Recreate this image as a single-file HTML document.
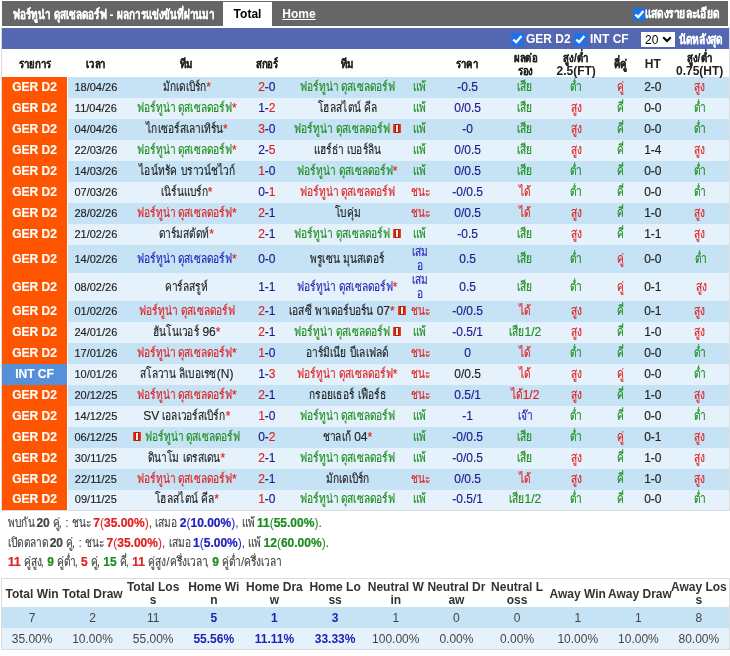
<!DOCTYPE html>
<html lang="th"><head><meta charset="utf-8"><style>
*{box-sizing:border-box}
html,body{margin:0;padding:0;background:#fff}
body{will-change:transform}
body{width:730px;height:656px;overflow:hidden;position:relative;font-family:"Liberation Sans",sans-serif;font-size:12px;color:#222222}
.t{display:inline-block;font-size:13px;line-height:0;transform:scaleX(var(--s));transform-origin:0 0;--s:.78;-webkit-text-stroke:.15px}
.topbar{position:absolute;left:2px;top:1px;width:726px;height:25px;background:#666666;color:#fff;font-weight:bold}
.topbar .title{position:absolute;left:11px;top:7px;white-space:nowrap}
.tab{position:absolute;top:1px;height:24px;line-height:25px;text-align:center;font-weight:bold}
.tab1{left:221px;width:49px;background:#fff;color:#000}
.tab2{left:268px;width:58px;color:#fff;text-decoration:underline}
.chk{position:absolute;width:13px;height:13px;border-radius:2px;background:#1a73e8}
.chk svg{position:absolute;left:0;top:0}
.detail{position:absolute;left:643px;top:6px;white-space:nowrap}
.bluebar{position:absolute;left:2px;top:28px;width:727px;height:21px;background:#5468b2;color:#fff;font-weight:bold;white-space:nowrap}
.bluebar span.lb{position:absolute;top:4px}
.bluebar span.lb2{top:5px}
.sel{position:absolute;left:639px;top:4px;width:34px;height:15px;background:#fff;color:#000;font-weight:normal;font-size:12px}
.main{position:absolute;left:1px;top:49px;width:729px;border:1px solid #dddddd;border-top:0;border-collapse:collapse;table-layout:fixed}
table{border-collapse:collapse;table-layout:fixed}
td,th{padding:0;text-align:center;white-space:nowrap;overflow:visible}
.main th{height:25px;padding-top:3px;line-height:12.5px;font-weight:bold;color:#222222;background:#fff}
.main td{height:21px;line-height:14px;padding-bottom:2px;-webkit-text-stroke:.15px}
.main tr.last td{height:20px;padding-bottom:1px}
.main tr.tall td{height:28px;line-height:13px;padding:1px 0 0}
.main tr.tall td.sm{line-height:13.5px;padding:1px 0 0;vertical-align:top}
.r1 td{background:#c6e2f5}
.r2 td{background:#e6f2fb}
.main td.lg{background:#ff5500;color:#fff;font-weight:bold;border-right:1px solid #fff}
.main td.lg.int{background:#5690d8}
.dt{font-size:11px}
.main td:last-child,.main th:last-child{padding-right:3px}
.cg{color:#1c8c1c}
.cr{color:#e0201f}
.cb{color:#1a1a8c}
.cbt{color:#2626b8}
.ck{color:#222222}
.st{color:#e0201f;font-weight:normal}
.ic{display:inline-block;width:8px;height:9px;background:linear-gradient(to right,#e8561a,#c4160e 30%,#c4160e 70%,#e8561a);vertical-align:0;position:relative}
.ic:after{content:"";position:absolute;left:3px;top:1px;width:2px;height:7px;background:#fff6e6}
.sum{position:absolute;left:8px;white-space:nowrap;color:#444}
.sum .t{--s:.78}
.sb{color:#2020c0}
.main th .t{--s:.8;font-size:12px;-webkit-text-stroke:.2px}
.topbar .t,.bluebar .t{-webkit-text-stroke:.2px}
.topbar .title .t{--s:.76}
.sum b{font-weight:bold;-webkit-text-stroke:.2px}
.stats{position:absolute;left:1px;top:578px;width:729px;border:1px solid #dddddd}
.stats th{height:28px;padding-top:2px;line-height:13px;font-weight:bold;color:#333;background:#fff}
.stats td{height:21px;color:#444;padding-top:1px}
.stats tr.l2 td{height:21px}
.stats td.hs{color:#2020b0;font-weight:bold}
</style></head><body>
<div class="topbar">
 <div class="title"><span class="t" style="margin-right:-11.76px">ฟอร์ทูน่า</span> <span class="t" style="margin-right:-16.56px">ดุสเซลดอร์ฟ</span> - <span class="t" style="margin-right:-30.72px">ผลการแข่งขันที่ผ่านมา</span></div>
 <div class="tab tab1">Total</div>
 <div class="tab tab2">Home</div>
 <div class="chk" style="left:631px;top:7px"><svg width="13" height="13" viewBox="0 0 13 13"><path d="M2.3 6.6 L5.2 9.2 L10.4 3" stroke="#fff" stroke-width="2.3" fill="none"/></svg></div>
 <div class="detail"><span class="t" style="margin-right:-20.90px">แสดงรายละเอียด</span></div>
</div>
<div style="position:absolute;left:1px;top:27px;width:1px;height:22px;background:#dddddd"></div><div style="position:absolute;left:729px;top:27px;width:1px;height:22px;background:#dddddd"></div>
<div class="bluebar">
 <div class="chk" style="left:509px;top:5px"><svg width="13" height="13" viewBox="0 0 13 13"><path d="M2.3 6.6 L5.2 9.2 L10.4 3" stroke="#fff" stroke-width="2.3" fill="none"/></svg></div>
 <span class="lb" style="left:524px">GER D2</span>
 <div class="chk" style="left:572px;top:5px"><svg width="13" height="13" viewBox="0 0 13 13"><path d="M2.3 6.6 L5.2 9.2 L10.4 3" stroke="#fff" stroke-width="2.3" fill="none"/></svg></div>
 <span class="lb" style="left:588px">INT CF</span>
 <div class="sel"><span style="position:absolute;left:4px;top:1px">20</span><svg style="position:absolute;left:21px;top:4px" width="10" height="7" viewBox="0 0 10 7"><path d="M1.2 1.3 L5 5 L8.8 1.3" stroke="#000" stroke-width="2" fill="none"/></svg></div>
 <span class="lb lb2" style="left:677px"><span class="t" style="margin-right:-12.32px">นัดหลังสุด</span></span>
</div>
<table class="main"><colgroup><col style="width:66px"><col style="width:56px"><col style="width:126px"><col style="width:34px"><col style="width:127px"><col style="width:18px"><col style="width:77px"><col style="width:38px"><col style="width:64px"><col style="width:24px"><col style="width:41px"><col style="width:56px"></colgroup>
<tr><th><span class="t" style="margin-right:-8.00px">รายการ</span></th><th><span class="t" style="margin-right:-5.00px">เวลา</span></th><th><span class="t" style="margin-right:-3.20px">ทีม</span></th><th><span class="t" style="margin-right:-5.40px">สกอร์</span></th><th><span class="t" style="margin-right:-3.20px">ทีม</span></th><th></th><th><span class="t" style="margin-right:-5.60px">ราคา</span></th><th><span class="t" style="margin-right:-5.80px">ผลต่อ</span><br><span class="t" style="margin-right:-3.80px">รอง</span></th><th><span class="t" style="margin-right:-2.60px">สูง</span>/<span class="t" style="margin-right:-3.00px">ต่ำ</span><br>2.5(FT)</th><th><span class="t" style="margin-right:-3.20px">คี่คู่</span></th><th>HT</th><th><span class="t" style="margin-right:-2.60px">สูง</span>/<span class="t" style="margin-right:-3.00px">ต่ำ</span><br>0.75(HT)</th></tr>
<tr class="r1"><td class="lg">GER D2</td><td class="dt">18/04/26</td><td><span class="ck"><span class="t" style="margin-right:-12.32px">มักเดเบิร์ก</span><b class="st">*</b></span></td><td><span class="cr">2</span><span class="cb">-0</span></td><td><span class="cg"><span class="t" style="margin-right:-10.78px">ฟอร์ทูน่า</span> <span class="t" style="margin-right:-15.18px">ดุสเซลดอร์ฟ</span></span></td><td class="cg sm"><span class="t" style="margin-right:-3.74px">แพ้</span></td><td class="cb">-0.5</td><td class="cg"><span class="t" style="margin-right:-4.40px">เสีย</span></td><td class="cg"><span class="t" style="margin-right:-3.30px">ต่ำ</span></td><td class="cr"><span class="t" style="margin-right:-1.98px">คู่</span></td><td class="ht">2-0</td><td class="cr"><span class="t" style="margin-right:-3.08px">สูง</span></td></tr><tr class="r2"><td class="lg">GER D2</td><td class="dt">11/04/26</td><td><span class="cg"><span class="t" style="margin-right:-10.78px">ฟอร์ทูน่า</span> <span class="t" style="margin-right:-15.18px">ดุสเซลดอร์ฟ</span><b class="st">*</b></span></td><td><span class="cb">1-</span><span class="cr">2</span></td><td><span class="ck"><span class="t" style="margin-right:-12.10px">โฮลสไตน์</span> <span class="t" style="margin-right:-3.74px">คีล</span></span></td><td class="cg sm"><span class="t" style="margin-right:-3.74px">แพ้</span></td><td class="cb">0/0.5</td><td class="cg"><span class="t" style="margin-right:-4.40px">เสีย</span></td><td class="cr"><span class="t" style="margin-right:-3.08px">สูง</span></td><td class="cg"><span class="t" style="margin-right:-1.98px">คี่</span></td><td class="ht">0-0</td><td class="cg"><span class="t" style="margin-right:-3.30px">ต่ำ</span></td></tr><tr class="r1"><td class="lg">GER D2</td><td class="dt">04/04/26</td><td><span class="ck"><span class="t" style="margin-right:-21.78px">ไกเซอร์สเลาเทิร์น</span><b class="st">*</b></span></td><td><span class="cr">3</span><span class="cb">-0</span></td><td><span class="cg"><span class="t" style="margin-right:-10.78px">ฟอร์ทูน่า</span> <span class="t" style="margin-right:-15.18px">ดุสเซลดอร์ฟ</span> <i class="ic"></i></span></td><td class="cg sm"><span class="t" style="margin-right:-3.74px">แพ้</span></td><td class="cb">-0</td><td class="cg"><span class="t" style="margin-right:-4.40px">เสีย</span></td><td class="cr"><span class="t" style="margin-right:-3.08px">สูง</span></td><td class="cg"><span class="t" style="margin-right:-1.98px">คี่</span></td><td class="ht">0-0</td><td class="cg"><span class="t" style="margin-right:-3.30px">ต่ำ</span></td></tr><tr class="r2"><td class="lg">GER D2</td><td class="dt">22/03/26</td><td><span class="cg"><span class="t" style="margin-right:-10.78px">ฟอร์ทูน่า</span> <span class="t" style="margin-right:-15.18px">ดุสเซลดอร์ฟ</span><b class="st">*</b></span></td><td><span class="cb">2-</span><span class="cr">5</span></td><td><span class="ck"><span class="t" style="margin-right:-8.36px">แฮร์ธ่า</span> <span class="t" style="margin-right:-9.68px">เบอร์ลิน</span></span></td><td class="cg sm"><span class="t" style="margin-right:-3.74px">แพ้</span></td><td class="cb">0/0.5</td><td class="cg"><span class="t" style="margin-right:-4.40px">เสีย</span></td><td class="cr"><span class="t" style="margin-right:-3.08px">สูง</span></td><td class="cg"><span class="t" style="margin-right:-1.98px">คี่</span></td><td class="ht">1-4</td><td class="cr"><span class="t" style="margin-right:-3.08px">สูง</span></td></tr><tr class="r1"><td class="lg">GER D2</td><td class="dt">14/03/26</td><td><span class="ck"><span class="t" style="margin-right:-10.78px">ไอน์ทรัค</span> <span class="t" style="margin-right:-15.18px">บราวน์ชไวก์</span></span></td><td><span class="cr">1</span><span class="cb">-0</span></td><td><span class="cg"><span class="t" style="margin-right:-10.78px">ฟอร์ทูน่า</span> <span class="t" style="margin-right:-15.18px">ดุสเซลดอร์ฟ</span><b class="st">*</b></span></td><td class="cg sm"><span class="t" style="margin-right:-3.74px">แพ้</span></td><td class="cb">0/0.5</td><td class="cg"><span class="t" style="margin-right:-4.40px">เสีย</span></td><td class="cg"><span class="t" style="margin-right:-3.30px">ต่ำ</span></td><td class="cg"><span class="t" style="margin-right:-1.98px">คี่</span></td><td class="ht">0-0</td><td class="cg"><span class="t" style="margin-right:-3.30px">ต่ำ</span></td></tr><tr class="r2"><td class="lg">GER D2</td><td class="dt">07/03/26</td><td><span class="ck"><span class="t" style="margin-right:-13.20px">เนิร์นแบร์ก</span><b class="st">*</b></span></td><td><span class="cb">0-</span><span class="cr">1</span></td><td><span class="cr"><span class="t" style="margin-right:-10.78px">ฟอร์ทูน่า</span> <span class="t" style="margin-right:-15.18px">ดุสเซลดอร์ฟ</span></span></td><td class="cr sm"><span class="t" style="margin-right:-5.50px">ชนะ</span></td><td class="cb">-0/0.5</td><td class="cr"><span class="t" style="margin-right:-3.30px">ได้</span></td><td class="cg"><span class="t" style="margin-right:-3.30px">ต่ำ</span></td><td class="cg"><span class="t" style="margin-right:-1.98px">คี่</span></td><td class="ht">0-0</td><td class="cg"><span class="t" style="margin-right:-3.30px">ต่ำ</span></td></tr><tr class="r1"><td class="lg">GER D2</td><td class="dt">28/02/26</td><td><span class="cr"><span class="t" style="margin-right:-10.78px">ฟอร์ทูน่า</span> <span class="t" style="margin-right:-15.18px">ดุสเซลดอร์ฟ</span><b class="st">*</b></span></td><td><span class="cr">2</span><span class="cb">-1</span></td><td><span class="ck"><span class="t" style="margin-right:-7.26px">โบคุ่ม</span></span></td><td class="cr sm"><span class="t" style="margin-right:-5.50px">ชนะ</span></td><td class="cb">0/0.5</td><td class="cr"><span class="t" style="margin-right:-3.30px">ได้</span></td><td class="cr"><span class="t" style="margin-right:-3.08px">สูง</span></td><td class="cg"><span class="t" style="margin-right:-1.98px">คี่</span></td><td class="ht">1-0</td><td class="cr"><span class="t" style="margin-right:-3.08px">สูง</span></td></tr><tr class="r2"><td class="lg">GER D2</td><td class="dt">21/02/26</td><td><span class="ck"><span class="t" style="margin-right:-14.08px">ดาร์มสตัดท์</span><b class="st">*</b></span></td><td><span class="cr">2</span><span class="cb">-1</span></td><td><span class="cg"><span class="t" style="margin-right:-10.78px">ฟอร์ทูน่า</span> <span class="t" style="margin-right:-15.18px">ดุสเซลดอร์ฟ</span> <i class="ic"></i></span></td><td class="cg sm"><span class="t" style="margin-right:-3.74px">แพ้</span></td><td class="cb">-0.5</td><td class="cg"><span class="t" style="margin-right:-4.40px">เสีย</span></td><td class="cr"><span class="t" style="margin-right:-3.08px">สูง</span></td><td class="cg"><span class="t" style="margin-right:-1.98px">คี่</span></td><td class="ht">1-1</td><td class="cr"><span class="t" style="margin-right:-3.08px">สูง</span></td></tr><tr class="r1 tall"><td class="lg">GER D2</td><td class="dt">14/02/26</td><td><span class="cbt"><span class="t" style="margin-right:-10.78px">ฟอร์ทูน่า</span> <span class="t" style="margin-right:-15.18px">ดุสเซลดอร์ฟ</span><b class="st">*</b></span></td><td><span class="cb">0-0</span></td><td><span class="ck"><span class="t" style="margin-right:-8.36px">พรูเซน</span> <span class="t" style="margin-right:-11.66px">มุนสเตอร์</span></span></td><td class="cbt sm"><span class="t" style="margin-right:-4.62px">เสม</span><br><span class="t" style="margin-right:-1.76px">อ</span></td><td class="cb">0.5</td><td class="cg"><span class="t" style="margin-right:-4.40px">เสีย</span></td><td class="cg"><span class="t" style="margin-right:-3.30px">ต่ำ</span></td><td class="cr"><span class="t" style="margin-right:-1.98px">คู่</span></td><td class="ht">0-0</td><td class="cg"><span class="t" style="margin-right:-3.30px">ต่ำ</span></td></tr><tr class="r2 tall"><td class="lg">GER D2</td><td class="dt">08/02/26</td><td><span class="ck"><span class="t" style="margin-right:-12.10px">คาร์ลสรูห์</span></span></td><td><span class="cb">1-1</span></td><td><span class="cbt"><span class="t" style="margin-right:-10.78px">ฟอร์ทูน่า</span> <span class="t" style="margin-right:-15.18px">ดุสเซลดอร์ฟ</span><b class="st">*</b></span></td><td class="cbt sm"><span class="t" style="margin-right:-4.62px">เสม</span><br><span class="t" style="margin-right:-1.76px">อ</span></td><td class="cb">0.5</td><td class="cg"><span class="t" style="margin-right:-4.40px">เสีย</span></td><td class="cg"><span class="t" style="margin-right:-3.30px">ต่ำ</span></td><td class="cr"><span class="t" style="margin-right:-1.98px">คู่</span></td><td class="ht">0-1</td><td class="cr"><span class="t" style="margin-right:-3.08px">สูง</span></td></tr><tr class="r1"><td class="lg">GER D2</td><td class="dt">01/02/26</td><td><span class="cr"><span class="t" style="margin-right:-10.78px">ฟอร์ทูน่า</span> <span class="t" style="margin-right:-15.18px">ดุสเซลดอร์ฟ</span></span></td><td><span class="cr">2</span><span class="cb">-1</span></td><td><span class="ck"><span class="t" style="margin-right:-6.38px">เอสซี</span> <span class="t" style="margin-right:-16.50px">พาเดอร์บอร์น</span> 07<b class="st">*</b> <i class="ic"></i></span></td><td class="cr sm"><span class="t" style="margin-right:-5.50px">ชนะ</span></td><td class="cb">-0/0.5</td><td class="cr"><span class="t" style="margin-right:-3.30px">ได้</span></td><td class="cr"><span class="t" style="margin-right:-3.08px">สูง</span></td><td class="cg"><span class="t" style="margin-right:-1.98px">คี่</span></td><td class="ht">0-1</td><td class="cr"><span class="t" style="margin-right:-3.08px">สูง</span></td></tr><tr class="r2"><td class="lg">GER D2</td><td class="dt">24/01/26</td><td><span class="ck"><span class="t" style="margin-right:-12.98px">ฮันโนเวอร์</span> 96<b class="st">*</b></span></td><td><span class="cr">2</span><span class="cb">-1</span></td><td><span class="cg"><span class="t" style="margin-right:-10.78px">ฟอร์ทูน่า</span> <span class="t" style="margin-right:-15.18px">ดุสเซลดอร์ฟ</span> <i class="ic"></i></span></td><td class="cg sm"><span class="t" style="margin-right:-3.74px">แพ้</span></td><td class="cb">-0.5/1</td><td class="cg"><span class="t" style="margin-right:-4.40px">เสีย</span>1/2</td><td class="cr"><span class="t" style="margin-right:-3.08px">สูง</span></td><td class="cg"><span class="t" style="margin-right:-1.98px">คี่</span></td><td class="ht">1-0</td><td class="cr"><span class="t" style="margin-right:-3.08px">สูง</span></td></tr><tr class="r1"><td class="lg">GER D2</td><td class="dt">17/01/26</td><td><span class="cr"><span class="t" style="margin-right:-10.78px">ฟอร์ทูน่า</span> <span class="t" style="margin-right:-15.18px">ดุสเซลดอร์ฟ</span><b class="st">*</b></span></td><td><span class="cr">1</span><span class="cb">-0</span></td><td><span class="ck"><span class="t" style="margin-right:-11.44px">อาร์มิเนีย</span> <span class="t" style="margin-right:-10.78px">บีเลเฟลด์</span></span></td><td class="cr sm"><span class="t" style="margin-right:-5.50px">ชนะ</span></td><td class="cb">0</td><td class="cr"><span class="t" style="margin-right:-3.30px">ได้</span></td><td class="cg"><span class="t" style="margin-right:-3.30px">ต่ำ</span></td><td class="cg"><span class="t" style="margin-right:-1.98px">คี่</span></td><td class="ht">0-0</td><td class="cg"><span class="t" style="margin-right:-3.30px">ต่ำ</span></td></tr><tr class="r2"><td class="lg int">INT CF</td><td class="dt">10/01/26</td><td><span class="ck"><span class="t" style="margin-right:-10.12px">สโลวาน</span> <span class="t" style="margin-right:-10.56px">ลิเบอเรซ</span>(N)</span></td><td><span class="cb">1-</span><span class="cr">3</span></td><td><span class="cr"><span class="t" style="margin-right:-10.78px">ฟอร์ทูน่า</span> <span class="t" style="margin-right:-15.18px">ดุสเซลดอร์ฟ</span><b class="st">*</b></span></td><td class="cr sm"><span class="t" style="margin-right:-5.50px">ชนะ</span></td><td class="ck">0/0.5</td><td class="cr"><span class="t" style="margin-right:-3.30px">ได้</span></td><td class="cr"><span class="t" style="margin-right:-3.08px">สูง</span></td><td class="cr"><span class="t" style="margin-right:-1.98px">คู่</span></td><td class="ht">0-0</td><td class="cg"><span class="t" style="margin-right:-3.30px">ต่ำ</span></td></tr><tr class="r1"><td class="lg">GER D2</td><td class="dt">20/12/25</td><td><span class="cr"><span class="t" style="margin-right:-10.78px">ฟอร์ทูน่า</span> <span class="t" style="margin-right:-15.18px">ดุสเซลดอร์ฟ</span><b class="st">*</b></span></td><td><span class="cr">2</span><span class="cb">-1</span></td><td><span class="ck"><span class="t" style="margin-right:-12.76px">กรอยเธอร์</span> <span class="t" style="margin-right:-7.92px">เฟือร์ธ</span></span></td><td class="cr sm"><span class="t" style="margin-right:-5.50px">ชนะ</span></td><td class="cb">0.5/1</td><td class="cr"><span class="t" style="margin-right:-3.30px">ได้</span>1/2</td><td class="cr"><span class="t" style="margin-right:-3.08px">สูง</span></td><td class="cg"><span class="t" style="margin-right:-1.98px">คี่</span></td><td class="ht">1-0</td><td class="cr"><span class="t" style="margin-right:-3.08px">สูง</span></td></tr><tr class="r2"><td class="lg">GER D2</td><td class="dt">14/12/25</td><td><span class="ck">SV <span class="t" style="margin-right:-17.82px">เอลเวอร์สเบิร์ก</span><b class="st">*</b></span></td><td><span class="cr">1</span><span class="cb">-0</span></td><td><span class="cg"><span class="t" style="margin-right:-10.78px">ฟอร์ทูน่า</span> <span class="t" style="margin-right:-15.18px">ดุสเซลดอร์ฟ</span></span></td><td class="cg sm"><span class="t" style="margin-right:-3.74px">แพ้</span></td><td class="cb">-1</td><td class="cbt"><span class="t" style="margin-right:-4.18px">เจ๊า</span></td><td class="cg"><span class="t" style="margin-right:-3.30px">ต่ำ</span></td><td class="cg"><span class="t" style="margin-right:-1.98px">คี่</span></td><td class="ht">0-0</td><td class="cg"><span class="t" style="margin-right:-3.30px">ต่ำ</span></td></tr><tr class="r1"><td class="lg">GER D2</td><td class="dt">06/12/25</td><td><span class="cg"><i class="ic"></i> <span class="t" style="margin-right:-10.78px">ฟอร์ทูน่า</span> <span class="t" style="margin-right:-15.18px">ดุสเซลดอร์ฟ</span></span></td><td><span class="cb">0-</span><span class="cr">2</span></td><td><span class="ck"><span class="t" style="margin-right:-7.92px">ชาลเก้</span> 04<b class="st">*</b></span></td><td class="cg sm"><span class="t" style="margin-right:-3.74px">แพ้</span></td><td class="cb">-0/0.5</td><td class="cg"><span class="t" style="margin-right:-4.40px">เสีย</span></td><td class="cg"><span class="t" style="margin-right:-3.30px">ต่ำ</span></td><td class="cr"><span class="t" style="margin-right:-1.98px">คู่</span></td><td class="ht">0-1</td><td class="cr"><span class="t" style="margin-right:-3.08px">สูง</span></td></tr><tr class="r2"><td class="lg">GER D2</td><td class="dt">30/11/25</td><td><span class="ck"><span class="t" style="margin-right:-8.80px">ดินาโม</span> <span class="t" style="margin-right:-10.56px">เดรสเดน</span><b class="st">*</b></span></td><td><span class="cr">2</span><span class="cb">-1</span></td><td><span class="cg"><span class="t" style="margin-right:-10.78px">ฟอร์ทูน่า</span> <span class="t" style="margin-right:-15.18px">ดุสเซลดอร์ฟ</span></span></td><td class="cg sm"><span class="t" style="margin-right:-3.74px">แพ้</span></td><td class="cb">-0/0.5</td><td class="cg"><span class="t" style="margin-right:-4.40px">เสีย</span></td><td class="cr"><span class="t" style="margin-right:-3.08px">สูง</span></td><td class="cg"><span class="t" style="margin-right:-1.98px">คี่</span></td><td class="ht">1-0</td><td class="cr"><span class="t" style="margin-right:-3.08px">สูง</span></td></tr><tr class="r1"><td class="lg">GER D2</td><td class="dt">22/11/25</td><td><span class="cr"><span class="t" style="margin-right:-10.78px">ฟอร์ทูน่า</span> <span class="t" style="margin-right:-15.18px">ดุสเซลดอร์ฟ</span><b class="st">*</b></span></td><td><span class="cr">2</span><span class="cb">-1</span></td><td><span class="ck"><span class="t" style="margin-right:-12.32px">มักเดเบิร์ก</span></span></td><td class="cr sm"><span class="t" style="margin-right:-5.50px">ชนะ</span></td><td class="cb">0/0.5</td><td class="cr"><span class="t" style="margin-right:-3.30px">ได้</span></td><td class="cr"><span class="t" style="margin-right:-3.08px">สูง</span></td><td class="cg"><span class="t" style="margin-right:-1.98px">คี่</span></td><td class="ht">1-0</td><td class="cr"><span class="t" style="margin-right:-3.08px">สูง</span></td></tr><tr class="r2 last"><td class="lg">GER D2</td><td class="dt">09/11/25</td><td><span class="ck"><span class="t" style="margin-right:-12.10px">โฮลสไตน์</span> <span class="t" style="margin-right:-3.74px">คีล</span><b class="st">*</b></span></td><td><span class="cr">1</span><span class="cb">-0</span></td><td><span class="cg"><span class="t" style="margin-right:-10.78px">ฟอร์ทูน่า</span> <span class="t" style="margin-right:-15.18px">ดุสเซลดอร์ฟ</span></span></td><td class="cg sm"><span class="t" style="margin-right:-3.74px">แพ้</span></td><td class="cb">-0.5/1</td><td class="cg"><span class="t" style="margin-right:-4.40px">เสีย</span>1/2</td><td class="cg"><span class="t" style="margin-right:-3.30px">ต่ำ</span></td><td class="cg"><span class="t" style="margin-right:-1.98px">คี่</span></td><td class="ht">0-0</td><td class="cg"><span class="t" style="margin-right:-3.30px">ต่ำ</span></td></tr>
</table>
<div class="sum" style="top:516px"><span class="t" style="margin-right:-8.98px">พบกัน</span> <b>20</b> <span class="t" style="margin-right:-3.48px">คู่</span>, : <span class="t" style="margin-right:-7.00px">ชนะ</span> <b class="cr">7</b><span class="cr">(</span><b class="cr">35.00%</b><span class="cr">)</span>, <span class="t" style="margin-right:-7.88px">เสมอ</span> <b class="sb">2</b><span class="sb">(</span><b class="sb">10.00%</b><span class="sb">)</span>, <span class="t" style="margin-right:-5.24px">แพ้</span> <b class="cg">11</b><span class="cg">(</span><b class="cg">55.00%</b><span class="cg">)</span>.</div>
<div class="sum" style="top:536px"><span class="t" style="margin-right:-12.72px">เปิดตลาด</span> <b>20</b> <span class="t" style="margin-right:-3.48px">คู่</span>, : <span class="t" style="margin-right:-7.00px">ชนะ</span> <b class="cr">7</b><span class="cr">(</span><b class="cr">35.00%</b><span class="cr">)</span>, <span class="t" style="margin-right:-7.88px">เสมอ</span> <b class="sb">1</b><span class="sb">(</span><b class="sb">5.00%</b><span class="sb">)</span>, <span class="t" style="margin-right:-5.24px">แพ้</span> <b class="cg">12</b><span class="cg">(</span><b class="cg">60.00%</b><span class="cg">)</span>.</div>
<div class="sum" style="top:555px"><b class="cr">11</b> <span class="t" style="margin-right:-6.56px">คู่สูง</span>, <b class="cg">9</b> <span class="t" style="margin-right:-6.78px">คู่ต่ำ</span>, <b class="cr">5</b> <span class="t" style="margin-right:-3.48px">คู่</span>, <b class="cg">15</b> <span class="t" style="margin-right:-3.48px">คี่</span>, <b class="cr">11</b> <span class="t" style="margin-right:-5.06px">คู่สูง</span>/<span class="t" style="margin-right:-12.06px">ครึ่งเวลา</span>, <b class="cg">9</b> <span class="t" style="margin-right:-5.28px">คู่ต่ำ</span>/<span class="t" style="margin-right:-12.06px">ครึ่งเวลา</span></div>
<table class="stats"><colgroup><col style="width:60.5px"><col style="width:60.5px"><col style="width:60.5px"><col style="width:60.5px"><col style="width:60.5px"><col style="width:60.5px"><col style="width:60.5px"><col style="width:60.5px"><col style="width:60.5px"><col style="width:60.5px"><col style="width:60.5px"><col style="width:60.5px"></colgroup>
<tr><th>Total Win</th><th>Total Draw</th><th>Total Los<br>s</th><th>Home Wi<br>n</th><th>Home Dra<br>w</th><th>Home Lo<br>ss</th><th>Neutral W<br>in</th><th>Neutral Dr<br>aw</th><th>Neutral L<br>oss</th><th>Away Win</th><th>Away Draw</th><th>Away Los<br>s</th></tr>
<tr class="r1"><td>7</td><td>2</td><td>11</td><td class="hs">5</td><td class="hs">1</td><td class="hs">3</td><td>1</td><td>0</td><td>0</td><td>1</td><td>1</td><td>8</td></tr>
<tr class="r2 l2"><td>35.00%</td><td>10.00%</td><td>55.00%</td><td class="hs">55.56%</td><td class="hs">11.11%</td><td class="hs">33.33%</td><td>100.00%</td><td>0.00%</td><td>0.00%</td><td>10.00%</td><td>10.00%</td><td>80.00%</td></tr>
</table>
</body></html>
